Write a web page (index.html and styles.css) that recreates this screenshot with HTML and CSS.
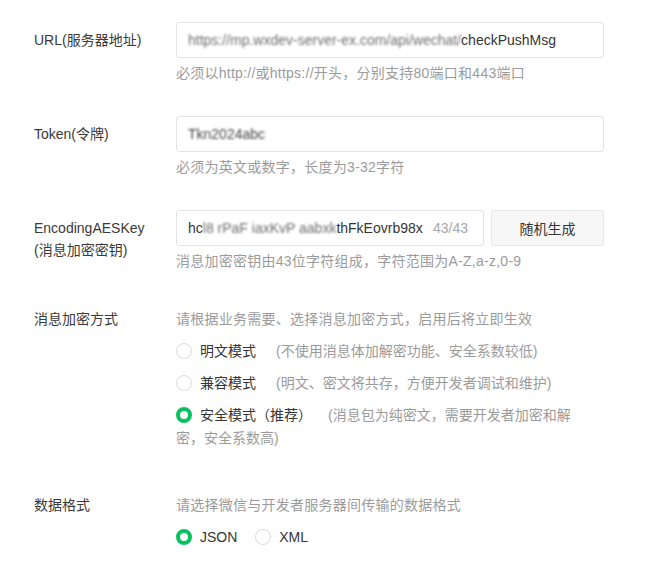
FILE: index.html
```html
<!DOCTYPE html>
<html lang="zh-CN">
<head>
<meta charset="utf-8">
<title>服务器配置</title>
<link rel="stylesheet" href="styles.css">
</head>
<body>
<div class="form">
  <div class="row">
    <div class="label">URL(服务器地址)</div>
    <div class="field">
      <div class="input"><span class="blur">https://mp.wxdev-server-ex.com/api/wechat/</span><span>checkPushMsg</span></div>
      <div class="hint">必须以http://或https://开头，分别支持80端口和443端口</div>
    </div>
  </div>
  <div class="row">
    <div class="label">Token(令牌)</div>
    <div class="field">
      <div class="input"><span class="blur dark">Tkn2024abc</span></div>
      <div class="hint">必须为英文或数字，长度为3-32字符</div>
    </div>
  </div>
  <div class="row">
    <div class="label">EncodingAESKey<br>(消息加密密钥)</div>
    <div class="field">
      <div class="key-line">
        <div class="input key-input"><span class="key-text">hc<span class="blur">l8 rPaF iaxKvP aabxk</span>thFkEovrb98x</span><span class="count">43/43</span></div>
        <button class="btn" type="button">随机生成</button>
      </div>
      <div class="hint">消息加密密钥由43位字符组成，字符范围为A-Z,a-z,0-9</div>
    </div>
  </div>
  <div class="row row-opts">
    <div class="label plain">消息加密方式</div>
    <div class="field">
      <div class="hint top">请根据业务需要、选择消息加密方式，启用后将立即生效</div>
      <div class="options">
        <div class="opt"><span class="radio"></span><span class="opt-name">明文模式</span><span class="desc">(不使用消息体加解密功能、安全系数较低)</span></div>
        <div class="opt"><span class="radio"></span><span class="opt-name">兼容模式</span><span class="desc">(明文、密文将共存，方便开发者调试和维护)</span></div>
        <div class="opt"><span class="radio on"></span><span class="opt-name">安全模式（推荐）</span><span class="desc tight">(消息包为纯密文，需要开发者加密和解密，安全系数高)</span></div>
      </div>
    </div>
  </div>
  <div class="row row-fmt">
    <div class="label plain">数据格式</div>
    <div class="field">
      <div class="hint top">请选择微信与开发者服务器间传输的数据格式</div>
      <div class="inline-opts">
        <span class="radio on"></span><span class="opt-name">JSON</span>
        <span class="radio second"></span><span class="opt-name">XML</span>
      </div>
    </div>
  </div>
</div>
</body>
</html>
```
FILE: styles.css
```css
html, body {
  margin: 0;
  padding: 0;
  background: #ffffff;
}
body {
  font-family: "Liberation Sans", "Noto Sans CJK SC", sans-serif;
  font-size: 14px;
  color: #353535;
}
.form {
  padding: 22px 0 0 34px;
}
.row {
  display: flex;
  margin-bottom: 33px;
}
.label {
  width: 142px;
  flex: none;
  padding-top: 7px;
  line-height: 22px;
  color: #3a3a3a;
}
.label.plain {
  padding-top: 0;
}
.field {
  width: 428px;
}
.input {
  box-sizing: border-box;
  height: 36px;
  border: 1px solid #e4e4e4;
  border-radius: 3px;
  padding: 0 11px;
  display: flex;
  align-items: center;
  font-size: 14px;
  color: #353535;
  white-space: nowrap;
  overflow: hidden;
}
.blur {
  filter: blur(1.3px);
  color: #6e6e6e;
}
.blur.dark {
  color: #444;
}
.hint {
  margin-top: 5px;
  line-height: 20px;
  color: #9b9b9b;
  letter-spacing: 0.25px;
}
.hint.top {
  margin-top: 0;
  line-height: 22px;
}
.key-line {
  display: flex;
  gap: 7px;
}
.key-input {
  width: 308px;
  flex: none;
  padding-right: 15px;
}
.key-text {
  width: 238px;
  overflow: hidden;
  flex: none;
}
.count {
  margin-left: auto;
  color: #a8a8a8;
}
.btn {
  width: 113px;
  height: 36px;
  border: 1px solid #e8e8e8;
  border-radius: 3px;
  background: #f7f7f7;
  font-family: inherit;
  font-size: 14px;
  color: #353535;
  padding: 0;
}
.row-opts {
  padding-top: 4px;
  margin-bottom: 44px;
}
.options {
  width: 408px;
}
.opt {
  margin-top: 10px;
  line-height: 22px;
}
.opt:last-child {
  line-height: 23px;
}
.radio {
  display: inline-block;
  box-sizing: border-box;
  width: 16px;
  height: 16px;
  border: 1px solid #dcdcdc;
  border-radius: 50%;
  vertical-align: -3px;
  margin-right: 8px;
  background: #fff;
}
.radio.on {
  border: 4px solid #07c160;
}
.opt-name {
  color: #353535;
}
.desc {
  margin-left: 20px;
  color: #9b9b9b;
}
.desc.tight {
  margin-left: 16px;
}
.inline-opts {
  margin-top: 10px;
  line-height: 22px;
}
.radio.second {
  margin-left: 14px;
}
```
